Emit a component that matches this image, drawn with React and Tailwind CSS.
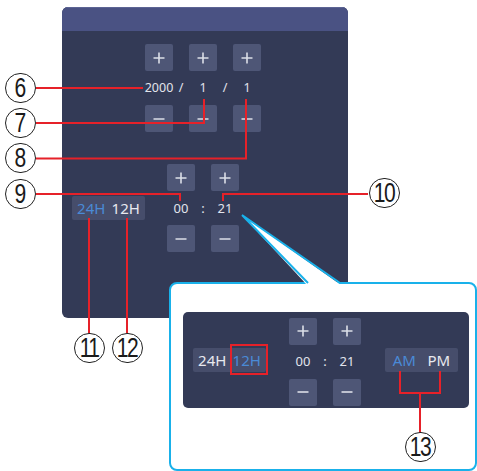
import React from "react";

const font = { fontFamily: '"Noto Sans", "Liberation Sans", sans-serif' };

function PlusBtn() {
  return (
    <div className="w-[28px] h-[27px] rounded-[2px] bg-[#4e5676] flex items-center justify-center">
      <svg width="12" height="12" viewBox="0 0 12 12">
        <path d="M6 0.5V11.5M0.5 6H11.5" stroke="#dcdfe8" strokeWidth="1.6" />
      </svg>
    </div>
  );
}

function MinusBtn() {
  return (
    <div className="w-[28px] h-[27px] rounded-[2px] bg-[#4e5676] flex items-center justify-center">
      <svg width="12" height="12" viewBox="0 0 12 12">
        <path d="M0.5 6H11.5" stroke="#dcdfe8" strokeWidth="1.6" />
      </svg>
    </div>
  );
}

function Toggle({ left, right, active }) {
  return (
    <div className="w-[73px] h-[24px] rounded-[2px] bg-[#464d6b] flex items-center justify-around px-[2px] text-[15px] leading-none">
      <span className={active === 0 ? "text-[#4a8ad6]" : "text-[#e8e9ef]"}>{left}</span>
      <span className={active === 1 ? "text-[#4a8ad6]" : "text-[#e8e9ef]"}>{right}</span>
    </div>
  );
}

function TimeGrid() {
  return (
    <div className="grid grid-cols-[28px_16px_28px] items-center text-[#e2e4ec] text-[13px] leading-none">
      <PlusBtn />
      <div />
      <PlusBtn />
      <div className="h-[34px] flex items-center justify-center">00</div>
      <div className="h-[34px] flex items-center justify-center">:</div>
      <div className="h-[34px] flex items-center justify-center">21</div>
      <MinusBtn />
      <div />
      <MinusBtn />
    </div>
  );
}

function Circ({ n, x, y }) {
  return (
    <div
      className="absolute w-[31px] h-[30px] rounded-full border border-[#222] bg-white flex items-center justify-center text-[#1a1a1a] text-[27px] leading-none tracking-[-2px]"
      style={{ left: x - 15.5, top: y - 15, fontFamily: '"Liberation Sans", sans-serif' }}
    >
      <span className="inline-block scale-x-[0.78]">{n}</span>
    </div>
  );
}

export default function App() {
  return (
    <div className="relative w-[477px] h-[471px] bg-white overflow-hidden" style={font}>
      {/* main panel */}
      <div className="ml-[62px] pt-[7px]">
        <div className="w-[286px] h-[311px] rounded-[6px] overflow-hidden bg-[#333a56] flex flex-col">
          <div className="h-[24px] bg-[#4a5283] border-t border-[#5c6494]" />
          <div className="pt-[13px]">
            <div className="ml-[83px] grid grid-cols-[28px_16px_28px_16px_28px] items-center text-[#e2e4ec] text-[12.5px] leading-none">
              <PlusBtn />
              <div />
              <PlusBtn />
              <div />
              <PlusBtn />
              <div className="h-[34px] flex items-center justify-center">2000</div>
              <div className="h-[34px] flex items-center justify-center">/</div>
              <div className="h-[34px] flex items-center justify-center">1</div>
              <div className="h-[34px] flex items-center justify-center">/</div>
              <div className="h-[34px] flex items-center justify-center">1</div>
              <MinusBtn />
              <div />
              <MinusBtn />
              <div />
              <MinusBtn />
            </div>
            <div className="mt-[32px] ml-[10px] flex items-center gap-[22px]">
              <Toggle left="24H" right="12H" active={0} />
              <TimeGrid />
            </div>
          </div>
        </div>
      </div>

      {/* callout box */}
      <div className="absolute left-[169px] top-[282px] w-[308px] h-[189px] rounded-[8px] border-2 border-[#19b1ea] bg-white">
        <div className="ml-[12px] mt-[28px] w-[286px] h-[96px] rounded-[5px] bg-[#333a56] flex items-center pl-[10px] gap-[23px]">
          <Toggle left="24H" right="12H" active={1} />
          <div className="mt-[3px]">
            <TimeGrid />
          </div>
          <div className="ml-[1px]">
            <Toggle left="AM" right="PM" active={0} />
          </div>
        </div>
      </div>

      {/* pointer + annotation lines */}
      <svg className="absolute left-0 top-0 pointer-events-none" width="477" height="471">
        <polygon points="242,215 307,285 341,285" fill="#ffffff" />
        <path d="M242 215 L308 283 M242 215 L340 283" stroke="#19b1ea" strokeWidth="2" fill="none" />
        <g stroke="#e62129" strokeWidth="2" fill="none">
          <path d="M36 88 H143" />
          <path d="M36 123 H204 V99" />
          <path d="M36 158.5 H246 V99" />
          <path d="M36 194 H180 V201" />
          <path d="M368 194 H223 V201" />
          <path d="M89 218 V333" />
          <path d="M127 218 V333" />
          <path d="M400 371 V393 H440 V371" />
          <path d="M420 393 V433" />
          <rect x="231" y="345" width="36" height="29" />
        </g>
      </svg>

      <Circ n="6" x={20} y={88} />
      <Circ n="7" x={20} y={123} />
      <Circ n="8" x={20} y={158} />
      <Circ n="9" x={20} y={194} />
      <Circ n="10" x={384} y={193} />
      <Circ n="11" x={89} y={348} />
      <Circ n="12" x={127} y={348} />
      <Circ n="13" x={420} y={447} />
    </div>
  );
}
